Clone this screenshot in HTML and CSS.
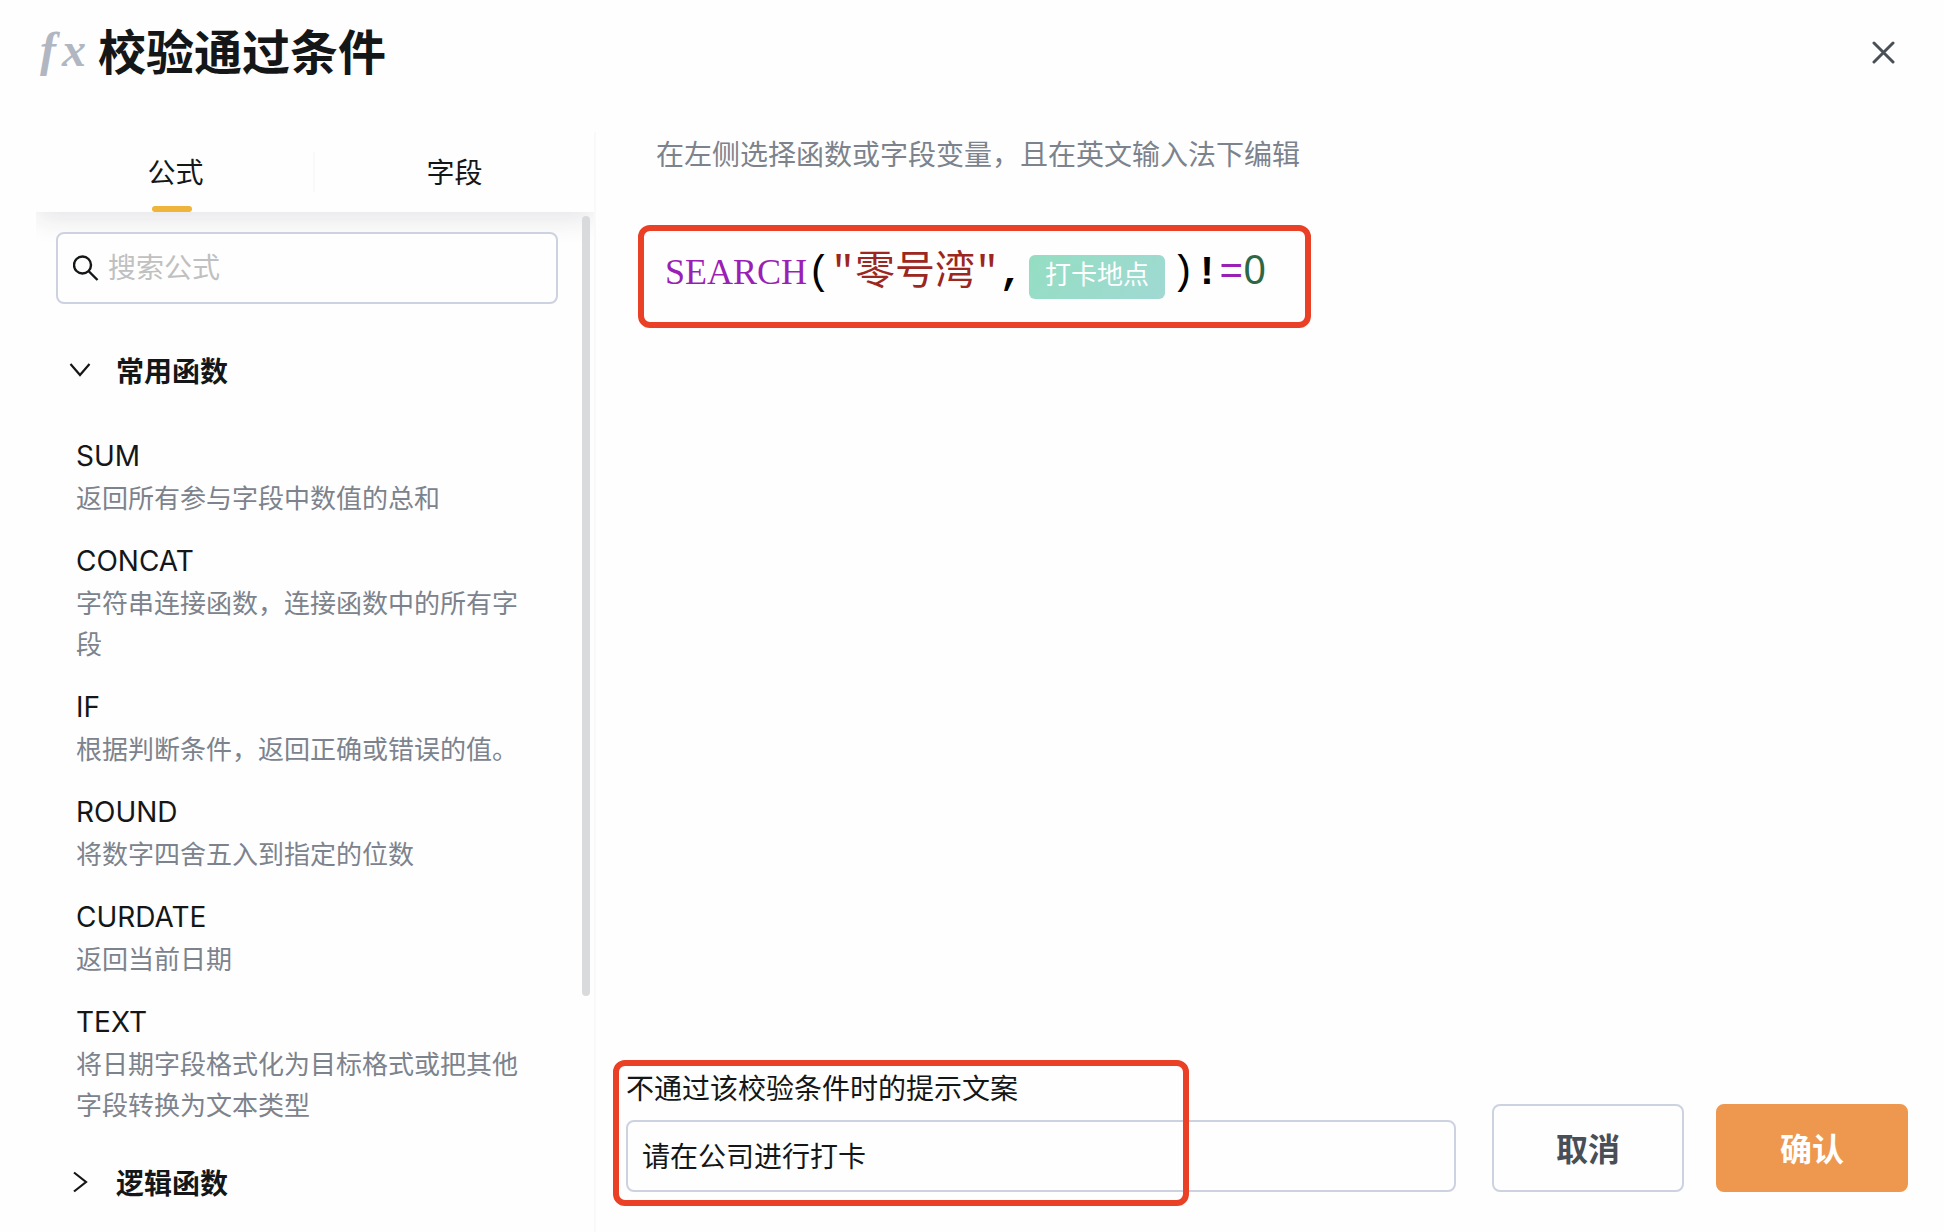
FILE: index.html
```html
<!DOCTYPE html>
<html lang="zh-CN">
<head>
  <meta charset="utf-8">
  <title>校验通过条件</title>
  <link rel="stylesheet" href="styles.css">
</head>
<body>

  <div class="dialog">
    <header class="dialog-header">
      <span class="fx"><i>f</i><i>x</i></span>
      <h1>校验通过条件</h1>
      <button type="button" class="close-btn" aria-label="关闭">
        <svg width="24" height="24" viewBox="0 0 24 24" fill="none" stroke="currentColor" stroke-width="3" stroke-linecap="round"><path d="M2 2l19 19M21 2L2 21"/></svg>
      </button>
    </header>

    <div class="dialog-body">
      <aside class="sidebar">
        <div class="tabs">
          <button type="button" class="tab active">公式</button>
          <button type="button" class="tab">字段</button>
        </div>

        <div class="scroll-area">
          <label class="search">
            <svg width="26" height="26" viewBox="0 0 26 26" fill="none" stroke="currentColor" stroke-width="2.4"><circle cx="9.5" cy="10" r="8.5"/><path d="M15.5 16l9 9"/></svg>
            <input type="text" placeholder="搜索公式" aria-label="搜索公式">
          </label>

          <button type="button" class="group">
            <svg width="24" height="24" viewBox="0 0 24 24" fill="none" stroke="currentColor" stroke-width="2.2"><path d="M2.5 6l9.5 11 9.5-11"/></svg>
            常用函数
          </button>

          <ul class="functions">
            <li>
              <h3>SUM</h3>
              <p>返回所有参与字段中数值的总和</p>
            </li>
            <li>
              <h3>CONCAT</h3>
              <p>字符串连接函数，连接函数中的所有字段</p>
            </li>
            <li>
              <h3>IF</h3>
              <p>根据判断条件，返回正确或错误的值。</p>
            </li>
            <li>
              <h3>ROUND</h3>
              <p>将数字四舍五入到指定的位数</p>
            </li>
            <li>
              <h3>CURDATE</h3>
              <p>返回当前日期</p>
            </li>
            <li>
              <h3>TEXT</h3>
              <p>将日期字段格式化为目标格式或把其他字段转换为文本类型</p>
            </li>
          </ul>

          <button type="button" class="group">
            <svg width="24" height="24" viewBox="0 0 24 24" fill="none" stroke="currentColor" stroke-width="2.2"><path d="M6 2.5l12 9.5-12 9.5"/></svg>
            逻辑函数
          </button>
          <div class="scrollbar"></div>
        </div>
      </aside>

      <main class="main">
        <p class="hint">在左侧选择函数或字段变量，且在英文输入法下编辑</p>

        <div class="formula">
          <span class="keyword">SEARCH</span><span>(</span><span class="string">"零号湾"</span><b>,</b><span class="field-tag">打卡地点</span><span>)</span><b>!</b><span class="operator">=</span><span class="number">0</span>
        </div>

        <div class="footer">
          <div class="message">
            <label for="message">不通过该校验条件时的提示文案</label>
            <input id="message" type="text" value="请在公司进行打卡">
            <div class="mark"></div>
          </div>
          <div class="actions">
            <button type="button" class="btn">取消</button>
            <button type="button" class="btn primary">确认</button>
          </div>
        </div>
      </main>
    </div>
  </div>

</body>
</html>
```
FILE: styles.css
```css
* {
  box-sizing: border-box;
}

body {
  margin: 0;
  background-color: #fefefe;
  color: #141617;
  font-family: Inter, "Noto Sans CJK SC", sans-serif;
  font-size: 28px;
}

h1, h3, p, ul {
  margin: 0;
  padding: 0;
}

button, input {
  font: inherit;
  color: inherit;
  border: none;
  background: none;
  padding: 0;
}

button {
  cursor: pointer;
}

svg {
  display: block;
  flex: none;
}

.dialog {
  display: flex;
  flex-direction: column;
  height: 100vh;
  overflow: hidden;
}

/* Header */
.dialog-header {
  display: flex;
  align-items: center;
  flex: none;
  height: 106px;
  margin-bottom: 26px;
  padding: 0 48px 0 40px;
}

.fx {
  display: flex;
  gap: 6px;
  width: 58px;
  padding-bottom: 8px;
  color: #b1b7c2;
  font-family: "Liberation Serif", serif;
  font-size: 48px;
  font-weight: bold;
}

.dialog-header h1 {
  font-size: 48px;
  font-weight: bold;
  line-height: 72px;
}

.close-btn {
  margin-left: auto;
  color: #494f57;
}

.dialog-body {
  display: flex;
  flex: 1;
  min-height: 0;
}

/* Left side */
.sidebar {
  display: flex;
  flex-direction: column;
  flex: none;
  width: 560px;
  margin-left: 36px;
  border-right: 2px solid #f9f9fa;
  overflow: hidden;
}

.tabs {
  display: flex;
  flex: none;
  height: 80px;
  box-shadow: 0 6px 28px rgba(30, 35, 60, 0.12);
  background-color: #fefefe;
  z-index: 1;
}

.tab {
  position: relative;
  flex: 1;
  padding-bottom: 2px;
}

.tab.active::before {
  content: "";
  position: absolute;
  top: 20px;
  right: 0;
  width: 2px;
  height: 40px;
  background-color: #f9f9fa;
}

.tab.active::after {
  content: "";
  position: absolute;
  left: calc(50% - 24px);
  bottom: 0;
  width: 40px;
  height: 6px;
  border-radius: 3px;
  background-color: #eeb43c;
}

.scroll-area {
  position: relative;
  flex: 1;
  padding: 20px 36px 0 20px;
}

.scrollbar {
  position: absolute;
  top: 4px;
  right: 4px;
  width: 8px;
  height: 780px;
  border-radius: 4px;
  background-color: #d9dadc;
  z-index: 2;
}

.search {
  position: relative;
  display: flex;
  align-items: center;
  gap: 9px;
  height: 72px;
  margin-bottom: 30px;
  padding: 0 15px;
  border: 2px solid #cdd2e1;
  border-radius: 8px;
  background-color: #fefefe;
  z-index: 2;
}

.search input {
  flex: 1;
  min-width: 0;
  outline: none;
}

.search input::placeholder {
  color: #c0c0c0;
  opacity: 1;
}

.group {
  display: flex;
  align-items: center;
  gap: 24px;
  width: 100%;
  height: 72px;
  padding-left: 12px;
  font-weight: bold;
}

.functions {
  list-style: none;
  padding: 28px 20px 0;
}

.functions li {
  margin-bottom: 20px;
}

.functions h3 {
  font-size: 28px;
  font-weight: normal;
  line-height: 44px;
}

.functions p {
  color: #7c838d;
  font-size: 26px;
  line-height: 41px;
}

/* Right side */
.main {
  display: flex;
  flex-direction: column;
  flex: 1;
  min-width: 0;
  padding: 0 36px 40px 30px;
}

.hint {
  padding-left: 30px;
  color: #7c838d;
  line-height: 46px;
}

.formula {
  display: flex;
  align-items: baseline;
  align-self: flex-start;
  height: 103px;
  margin: 47px 0 0 12px;
  padding: 10px 39px 0 21px;
  border: 6px solid #ea4025;
  border-radius: 12px;
  color: #000;
  font-family: "Liberation Mono", "Noto Sans CJK SC", monospace;
  font-size: 40px;
  line-height: 56px;
}

.keyword {
  color: #9a1fb4;
  font-family: "Liberation Serif", serif;
  font-size: 36px;
}

.string {
  color: #9c2620;
}

.operator {
  color: #9a1fb4;
}

.number {
  color: #2f6645;
  font-family: "Noto Sans", sans-serif;
}

.field-tag {
  margin: 0 6px;
  padding: 0 16px;
  border-radius: 6px;
  background: linear-gradient(135deg, #94dec2, #a0d9d3);
  color: #fff;
  font-size: 26px;
  line-height: 44px;
}

/* Footer */
.footer {
  display: flex;
  align-items: flex-end;
  gap: 36px;
  margin-top: auto;
}

.message {
  position: relative;
  display: flex;
  flex-direction: column;
  flex: 1;
  gap: 9px;
}

.message label {
  line-height: 44px;
}

.message input {
  height: 72px;
  padding: 0 14px 2px;
  border: 2px solid #cdd2e1;
  border-radius: 8px;
}

/* red frame over the label and part of the input */
.mark {
  position: absolute;
  top: -7px;
  bottom: -14px;
  left: -13px;
  width: 576px;
  border: 6px solid #ea4025;
  border-radius: 12px;
  pointer-events: none;
}

.actions {
  display: flex;
  gap: 32px;
}

.btn {
  width: 192px;
  height: 88px;
  padding-bottom: 2px;
  border: 2px solid #cdd2e1;
  border-radius: 8px;
  color: #494f57;
  font-size: 32px;
  font-weight: bold;
}

.btn.primary {
  border-color: #ee984f;
  background-color: #ee984f;
  color: #fff;
}
```
